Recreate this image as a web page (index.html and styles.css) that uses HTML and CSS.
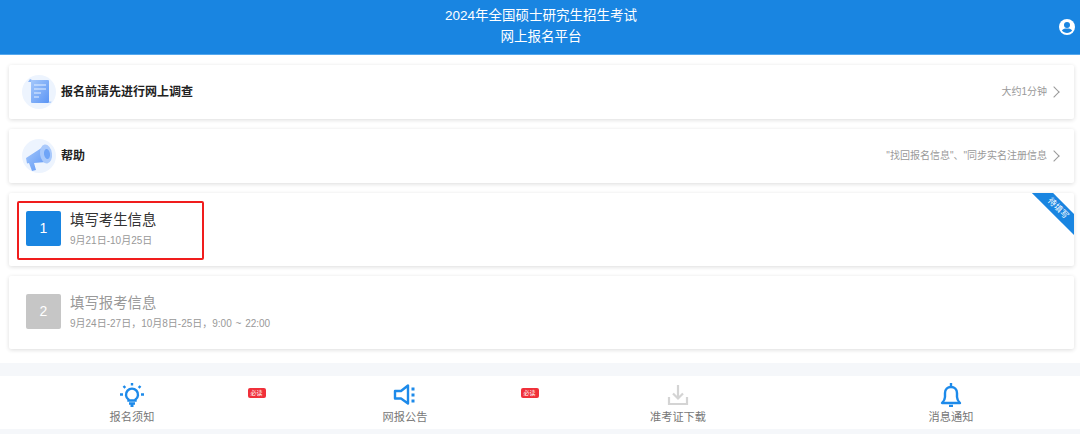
FILE: index.html
```html
<!DOCTYPE html>
<html>
<head>
  <title>网上报名平台</title>
  <link rel="stylesheet" href="styles.css">
</head>
<body>
  <header class="top-bar">
    <h1 class="top-title">2024年全国硕士研究生招生考试<br>网上报名平台</h1>
    <svg class="user-icon" viewBox="0 0 16 16">
      <circle cx="8" cy="8" r="8" fill="#fff"/>
      <circle cx="8" cy="6" r="3" fill="#1985e1"/>
      <path d="M2.900 11.600C4 9.900 6 9.600 8 9.600s4 .3 5.100 2C12 13.200 10 14 8 14s-4-.8-5.100-2.400z" fill="#1985e1"/>
    </svg>
  </header>

  <main class="content">
    <section class="card link-card">
      <svg class="round-icon" viewBox="0 0 34 34">
        <defs>
          <linearGradient id="blue-fade" x1="0" y1="0" x2="1" y2="1">
            <stop offset="0" stop-color="#a5c8fb"/>
            <stop offset="1" stop-color="#5b95f5"/>
          </linearGradient>
        </defs>
        <circle cx="17" cy="17" r="17" fill="#edf4fe"/>
        <path d="M6 7l2-3 2 1v2z" fill="#8db6f8"/>
        <rect x="9" y="5" width="18" height="23" rx="1" fill="url(#blue-fade)"/>
        <path d="M9 28h19c1 0 1.500-.6 1.500-1.500H27V28z" fill="#b3d0fb"/>
        <path d="M12 10h12M12 14h12M12 18h7M12 22h5" stroke="#e4efff" stroke-width="1.200"/>
      </svg>
      <span class="link-title">报名前请先进行网上调查</span>
      <span class="link-note">大约1分钟</span>
      <span class="chevron"></span>
    </section>

    <section class="card link-card">
      <svg class="round-icon" viewBox="0 0 34 34">
        <circle cx="17" cy="17" r="17" fill="#edf4fe"/>
        <path d="M4 19l17-11 3 15-12 1 2 7-4 1-3-8-2 .5z" fill="url(#blue-fade)"/>
        <ellipse cx="24" cy="15" rx="6" ry="9.500" transform="rotate(-8 24 15)" fill="#a9c9fb"/>
        <ellipse cx="25" cy="15" rx="3" ry="5" transform="rotate(-8 25 15)" fill="#6ea4f7"/>
      </svg>
      <span class="link-title">帮助</span>
      <span class="link-note">"找回报名信息"、"同步实名注册信息</span>
      <span class="chevron"></span>
    </section>

    <section class="card step-card">
      <div class="step-head step-head-marked">
        <div class="step-num">1</div>
        <div class="step-text">
          <div class="step-title">填写考生信息</div>
          <div class="step-date">9月21日-10月25日</div>
        </div>
      </div>
      <span class="ribbon">待填写</span>
    </section>

    <section class="card step-card step-off">
      <div class="step-head">
        <div class="step-num">2</div>
        <div class="step-text">
          <div class="step-title">填写报考信息</div>
          <div class="step-date">9月24日-27日，10月8日-25日，9:00 ~ 22:00</div>
        </div>
      </div>
    </section>
  </main>

  <nav class="tab-bar">
    <div class="tab">
      <svg class="tab-icon" viewBox="0 0 24 24" fill="none" stroke="#1d8aea" stroke-width="2.400">
        <path d="M8.500 16.500a6 6 0 1 1 7 0v1h-7z"/>
        <path d="M9 20.500h6M10.500 23h3M12 0v2.500M3.500 3l1.800 1.800M20.500 3l-1.800 1.800M0 11.500h3M21 11.500h3"/>
      </svg>
      <span class="tab-label">报名须知</span>
      <span class="must-read">必读</span>
    </div>
    <div class="tab">
      <svg class="tab-icon" viewBox="0 0 24 24" fill="none" stroke="#1d8aea" stroke-width="2.400">
        <path d="M2 8h6l7-5.500v18L8 15.500H2z" stroke-linejoin="round"/>
        <path d="M20 4.500v3M20 10.500v3M20 16.500v3" stroke-width="3"/>
      </svg>
      <span class="tab-label">网报公告</span>
      <span class="must-read">必读</span>
    </div>
    <div class="tab">
      <svg class="tab-icon" viewBox="0 0 24 24" fill="none" stroke="#d4d4d4" stroke-width="2.200">
        <path d="M12 2v13M7 10.500l5 5 5-5M3 14v7h18v-7"/>
      </svg>
      <span class="tab-label">准考证下载</span>
    </div>
    <div class="tab">
      <svg class="tab-icon" viewBox="0 0 24 24" fill="none" stroke="#1d8aea" stroke-width="2.400">
        <path d="M3 20h18c-2-2-3-3-3-6V10c0-4-2.500-6-6-6s-6 2-6 6v4c0 3-1 4-3 6z" stroke-linejoin="round"/>
        <path d="M12 0v4M10 23h4"/>
      </svg>
      <span class="tab-label">消息通知</span>
    </div>
  </nav>
</body>
</html>
```

FILE: styles.css
```css
body {
  margin: 0;
  height: 434px;
  overflow: hidden;
  background-color: #f5f7fa;
  font-family: "Liberation Sans", "Noto Sans CJK SC", sans-serif;
  color: #333;
}
.top-bar {
  position: relative;
  height: 54px;
  background-color: #1985e1;
  border-bottom: 1px solid #55a8ee;
  text-align: center;
  color: #fff;
}
.top-title {
  margin: 0;
  padding: 5px 0 0 2px;
  font-size: 13.5px;
  font-weight: normal;
  line-height: 21px;
}
.user-icon {
  position: absolute;
  top: 19px;
  right: 5px;
  width: 16px;
  height: 16px;
}
.content {
  height: 298px;
  padding: 10px 6px 0 9px;
  background-color: #fff;
  display: flex;
  flex-direction: column;
  gap: 10px;
}
.card {
  position: relative;
  overflow: hidden;
  background-color: #fff;
  border-radius: 2px;
  box-shadow: 0 1px 4px rgba(0, 0, 0, 0.14);
}
.link-card {
  height: 54px;
  display: flex;
  align-items: center;
  padding: 0 14px 0 13px;
}
.round-icon {
  width: 34px;
  height: 34px;
  margin-right: 5px;
}
.link-title {
  margin-bottom: 3px;
  font-size: 12px;
  font-weight: bold;
  color: #222;
}
.link-note {
  margin: 0 0 3px auto;
  font-size: 10px;
  color: #999;
}
.chevron {
  width: 7px;
  height: 7px;
  margin: 0 2.500px 1px;
  border-top: 1px solid #999;
  border-right: 1px solid #999;
  transform: rotate(45deg);
}
.step-card {
  flex-shrink: 0;
  height: 73px;
  padding: 8px;
  box-sizing: border-box;
}
.step-head {
  width: 187px;
  height: 59px;
  box-sizing: border-box;
  display: flex;
  gap: 9px;
  padding: 8px 0 0 7px;
  border: 2px solid transparent;
  border-radius: 2px;
}
.step-head-marked {
  border-color: #f01d1d;
}
.step-off .step-head {
  width: auto;
}
.step-num {
  width: 35px;
  height: 35px;
  line-height: 35px;
  text-align: center;
  font-size: 14px;
  color: #fff;
  background-color: #1985e1;
  border-radius: 2px;
}
.step-text {
  margin-top: -1px;
}
.step-title {
  font-size: 14.4px;
  line-height: 20px;
  color: #333;
}
.step-date {
  margin-top: 4px;
  font-size: 10px;
  line-height: 14px;
  word-spacing: 1px;
  color: #999;
}
.step-off .step-num {
  background-color: #c6c6c6;
}
.step-off .step-title {
  color: #999;
}
.ribbon {
  position: absolute;
  top: 8px;
  right: -24px;
  width: 80px;
  height: 15px;
  line-height: 15px;
  text-align: center;
  font-size: 8.500px;
  color: #fff;
  background-color: #1985e1;
  transform: rotate(45deg);
}
.tab-bar {
  display: flex;
  width: 1092px;
  height: 53px;
  margin: 13px 0 0 -4.500px;
  background-color: #fff;
}
.tab {
  position: relative;
  width: 273px;
  display: flex;
  flex-direction: column;
  align-items: center;
  padding-top: 7px;
  box-sizing: border-box;
}
.tab-icon {
  width: 24px;
  height: 24px;
}
.tab-label {
  margin-top: 2px;
  font-size: 11.200px;
  line-height: 16px;
  color: #777;
}
.must-read {
  position: absolute;
  top: 12px;
  left: 252px;
  width: 18px;
  height: 10px;
  line-height: 10px;
  text-align: center;
  font-size: 6px;
  color: #fff;
  background-color: #f0303a;
  border-radius: 2px;
}
```
